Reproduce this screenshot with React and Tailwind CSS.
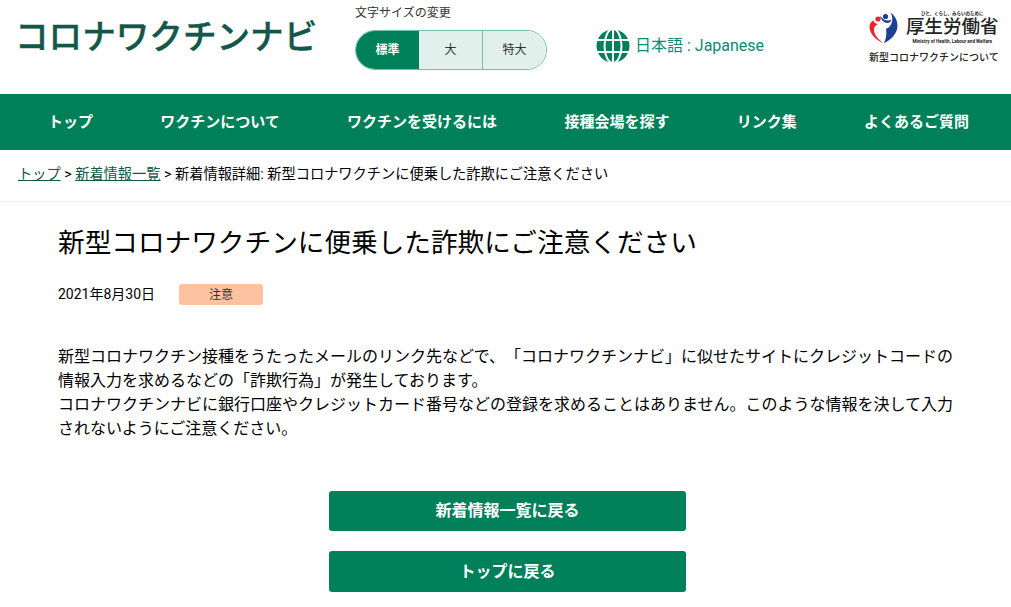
const jp = "font-['Roboto','Noto_Sans_CJK_JP',sans-serif]";

const navItems = ['トップ', 'ワクチンについて', 'ワクチンを受けるには', '接種会場を探す', 'リンク集', 'よくあるご質問'];

function GlobeIcon() {
  return (
    <svg width="34" height="34" viewBox="0 0 34 34" className="shrink-0">
      <circle cx="17" cy="17" r="16.5" fill="#008059" />
      <g fill="none" stroke="#fff" strokeWidth="2">
        <ellipse cx="17" cy="17" rx="8.500" ry="17" />
        <path d="M17 0v34M0 11h34M0 23h34" />
      </g>
    </svg>
  );
}

function MhlwMark() {
  return (
    <svg width="29" height="32" viewBox="0 0 29 32" className="shrink-0">
      <path d="M14.500 31.500C7 28 .5 21.500.5 15c0-3 1.500-5.500 4-6.500.6 2 2.200 3.500 5 3.500-2.500.8-4.500 2.800-4.500 6 0 4.500 4.500 9.500 9.500 13.500z" fill="#e8262a" />
      <circle cx="9" cy="7" r="2.600" fill="#e8262a" />
      <path d="M14.500 31.500C22 28 28.500 21.500 28.500 13.500c0-5.500-3-10-7-13 2 3.500 2.500 8 .8 11.500-1.300 2.800-3.300 4.300-5.300 4.800 1 5.500 0 10.700-2.500 15.200z" fill="#1d3f94" />
      <path d="M10.500 3.500c1.500 4.500 4.500 7.500 8 7.500 2 0 3.500-1.500 4-3.500-3 2-7.500 1.500-12-4z" fill="#1d3f94" />
      <circle cx="16.500" cy="4.500" r="2.600" fill="#1d3f94" />
    </svg>
  );
}

export default function App() {
  return (
    <div className={`${jp} bg-white text-black w-full overflow-hidden [text-spacing-trim:space-all]`}>
      <header className="h-[94px] flex items-start">
        <div className="w-[355px] pl-[15px] pt-[13px] text-[33.600px] leading-[50px] font-medium whitespace-nowrap text-[#13574a] [-webkit-text-stroke:0.4px_#13574a]">
          コロナワクチンナビ
        </div>
        <div className="w-[192px] pt-[5px]">
          <div className="text-[12px] leading-[16px] text-[#333]">文字サイズの変更</div>
          <div className="mt-[9px] flex h-[40px] w-[192px] rounded-full border border-[#6fc0a6] overflow-hidden text-[12px]">
            <div className="w-[63px] bg-[#008059] text-white font-bold flex items-center justify-center">標準</div>
            <div className="w-[64px] bg-[#e1f0eb] text-[#333] border-r border-[#6fc0a6] flex items-center justify-center">大</div>
            <div className="flex-1 bg-[#e1f0eb] text-[#333] flex items-center justify-center">特大</div>
          </div>
        </div>
        <div className="ml-[49px] mt-[29px] flex items-center gap-[5px] text-[#0a8a78] text-[16px] leading-[34px] whitespace-nowrap">
          <GlobeIcon />
          <span>日本語 : Japanese</span>
        </div>
        <div className="ml-auto mr-[13px] mt-[11px] w-[129px]">
          <div className="flex items-center gap-[8px]">
            <MhlwMark />
            <div className="flex flex-col items-center w-[93px]">
              <div className="text-[4.500px] leading-[6px] font-bold text-[#222] whitespace-nowrap">ひと、くらし、みらいのために</div>
              <div className="text-[18.500px] leading-[21px] font-medium text-[#222] whitespace-nowrap">厚生労働省</div>
              <div className="text-[4.600px] leading-[7px] font-bold text-[#222] whitespace-nowrap">Ministry of Health, Labour and Welfare</div>
            </div>
          </div>
          <div className="text-[10px] leading-[14px] mt-[6px] font-medium text-[#222] whitespace-nowrap">新型コロナワクチンについて</div>
        </div>
      </header>

      <nav className="h-[56px] bg-[#008059] flex items-center justify-between pl-[48px] pr-[42px]">
        {navItems.map((item) => (
          <a key={item} className="text-white text-[15px] font-bold whitespace-nowrap">{item}</a>
        ))}
      </nav>

      <div className="h-[52px] border-b border-[#eeeeee] pl-[18px] pt-[14px] text-[14.230px] leading-[20px] whitespace-nowrap">
        <a className="underline text-[#13574a]">トップ</a>
        <span> &gt; </span>
        <a className="underline text-[#13574a]">新着情報一覧</a>
        <span> &gt; 新着情報詳細: 新型コロナワクチンに便乗した詐欺にご注意ください</span>
      </div>

      <main className="pl-[58px] pr-[52px]">
        <h1 className="mt-[22px] text-[26.650px] leading-[38px] font-normal whitespace-nowrap">新型コロナワクチンに便乗した詐欺にご注意ください</h1>
        <div className="mt-[22px] flex items-center h-[21px]">
          <span className="text-[14px] w-[121px]">2021年8月30日</span>
          <span className="w-[84px] h-[21px] rounded-[3px] bg-[#fdc3a0] text-[#333] text-[12px] flex items-center justify-center">注意</span>
        </div>
        <p className="mt-[40px] text-[16px] leading-[24px]">
          新型コロナワクチン接種をうたったメールのリンク先などで、「コロナワクチンナビ」に似せたサイトにクレジットコードの情報入力を求めるなどの「詐欺行為」が発生しております。
          <br />
          コロナワクチンナビに銀行口座やクレジットカード番号などの登録を求めることはありません。このような情報を決して入力されないようにご注意ください。
        </p>
        <div className="mt-[50px] pr-[2px] flex flex-col items-center gap-[20px]">
          <a className="w-[357px] h-[40px] rounded-[3px] bg-[#008059] text-white text-[16px] font-bold flex items-center justify-center">新着情報一覧に戻る</a>
          <a className="w-[357px] h-[41px] rounded-[3px] bg-[#008059] text-white text-[16px] font-bold flex items-center justify-center">トップに戻る</a>
        </div>
      </main>
    </div>
  );
}
